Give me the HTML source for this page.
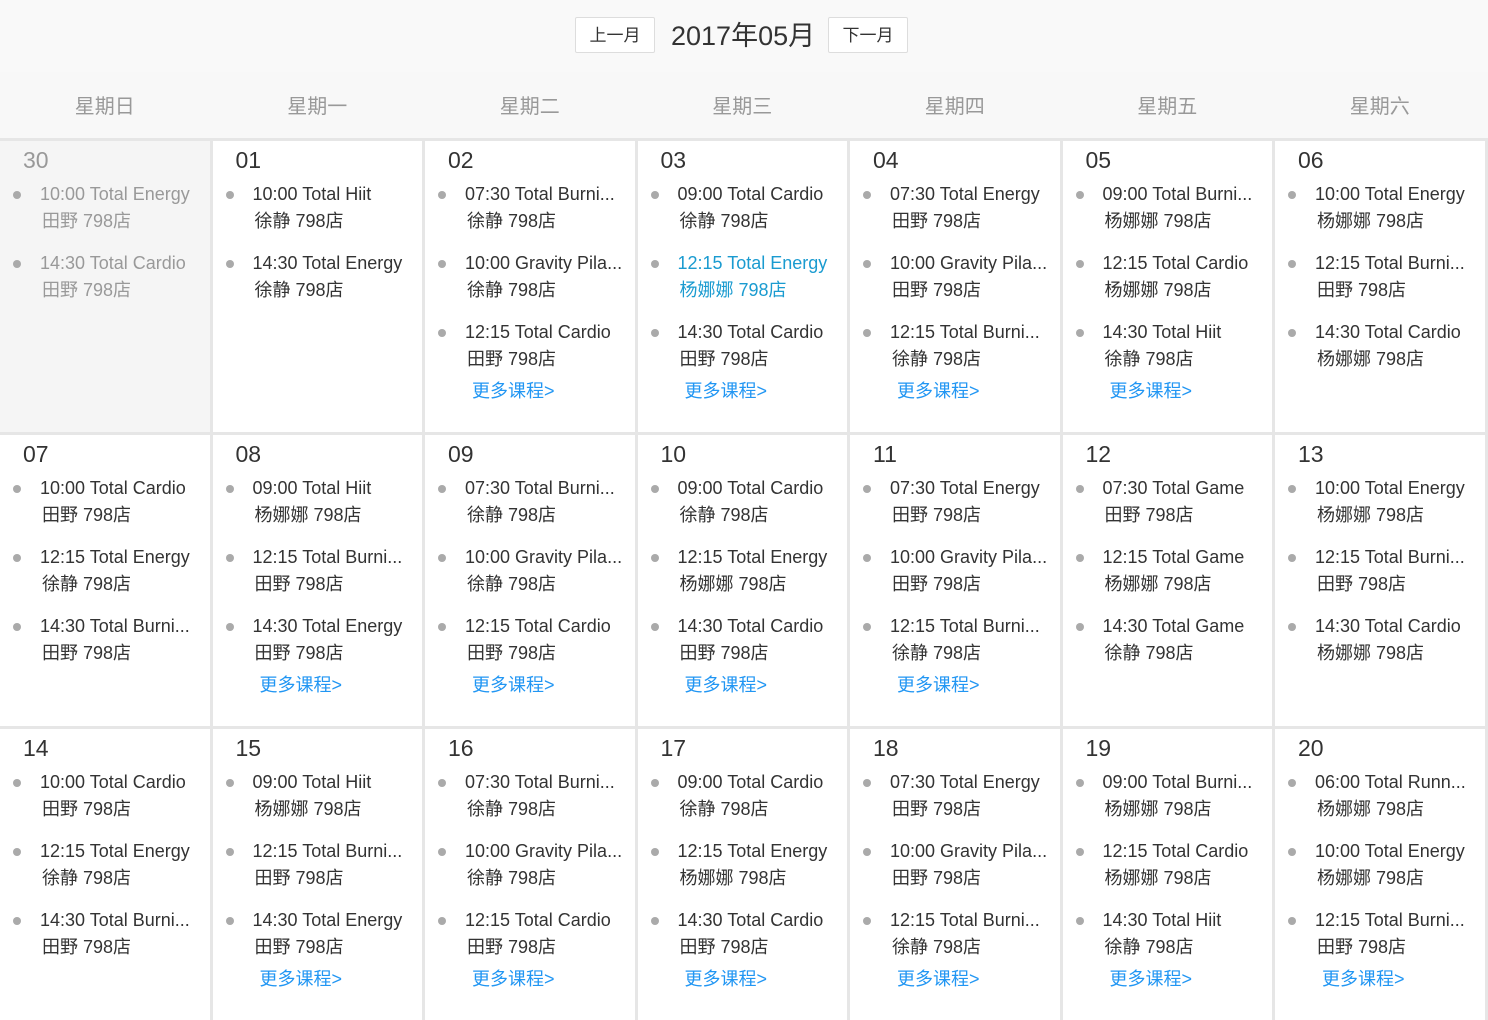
<!DOCTYPE html>
<html><head><meta charset="utf-8">
<style>
*{margin:0;padding:0;box-sizing:border-box}
body{width:1488px;height:1020px;overflow:hidden;background:#e6e6e6;font-family:"Liberation Sans","Noto Sans CJK SC",sans-serif;position:relative}
.top{position:absolute;left:0;top:0;width:1488px;height:72px;background:#f9f9f9}
.btn{position:absolute;top:17px;height:36px;width:80px;border:1px solid #ddd;border-radius:2px;background:#fff;font-size:17px;line-height:36px;text-align:center;color:#333}
.title{position:absolute;left:671px;top:16px;font-size:27px;line-height:40px;color:#333}
.wk{position:absolute;left:0;top:72px;width:1488px;height:66px;background:#f8f8f8}
.wk div{position:absolute;top:2px;width:209.5px;text-align:center;line-height:66px;font-size:20px;color:#999}
.c{position:absolute;width:209.5px;height:291px;background:#fff;color:#333}
.c.g{background:#f5f5f5;color:#999}
.d{position:absolute;left:23px;top:4px;font-size:23px;line-height:30px}
.e{position:absolute;left:0;width:209px;font-size:18px;line-height:27px;white-space:nowrap;margin-top:1px}
.e::before{content:"";position:absolute;left:13px;top:10px;width:8px;height:8px;border-radius:50%;background:#aaa}
.e span{display:block;padding-left:40px}
.e span+span{padding-left:42px}
.e.b{color:#1a9bd0}
.m{position:absolute;left:47px;top:237px;font-size:18px;line-height:27px;color:#2196f3}
</style></head><body>
<div class="top">
<div class="btn" style="left:575px">上一月</div>
<div class="title">2017年05月</div>
<div class="btn" style="left:828px">下一月</div>
</div>
<div class="wk">
<div style="left:0">星期日</div><div style="left:212.5px">星期一</div><div style="left:425px">星期二</div><div style="left:637.5px">星期三</div><div style="left:850px">星期四</div><div style="left:1062.5px">星期五</div><div style="left:1275px">星期六</div>
</div>

<!-- Row 1 -->
<div class="c g" style="left:0;top:141px"><div class="d">30</div>
<div class="e" style="top:38.5px"><span>10:00 Total Energy</span><span>田野 798店</span></div>
<div class="e" style="top:107.5px"><span>14:30 Total Cardio</span><span>田野 798店</span></div></div>
<div class="c" style="left:212.5px;top:141px"><div class="d">01</div>
<div class="e" style="top:38.5px"><span>10:00 Total Hiit</span><span>徐静 798店</span></div>
<div class="e" style="top:107.5px"><span>14:30 Total Energy</span><span>徐静 798店</span></div></div>
<div class="c" style="left:425px;top:141px"><div class="d">02</div>
<div class="e" style="top:38.5px"><span>07:30 Total Burni...</span><span>徐静 798店</span></div>
<div class="e" style="top:107.5px"><span>10:00 Gravity Pila...</span><span>徐静 798店</span></div>
<div class="e" style="top:176.5px"><span>12:15 Total Cardio</span><span>田野 798店</span></div><div class="m">更多课程&gt;</div></div>
<div class="c" style="left:637.5px;top:141px"><div class="d">03</div>
<div class="e" style="top:38.5px"><span>09:00 Total Cardio</span><span>徐静 798店</span></div>
<div class="e b" style="top:107.5px"><span>12:15 Total Energy</span><span>杨娜娜 798店</span></div>
<div class="e" style="top:176.5px"><span>14:30 Total Cardio</span><span>田野 798店</span></div><div class="m">更多课程&gt;</div></div>
<div class="c" style="left:850px;top:141px"><div class="d">04</div>
<div class="e" style="top:38.5px"><span>07:30 Total Energy</span><span>田野 798店</span></div>
<div class="e" style="top:107.5px"><span>10:00 Gravity Pila...</span><span>田野 798店</span></div>
<div class="e" style="top:176.5px"><span>12:15 Total Burni...</span><span>徐静 798店</span></div><div class="m">更多课程&gt;</div></div>
<div class="c" style="left:1062.5px;top:141px"><div class="d">05</div>
<div class="e" style="top:38.5px"><span>09:00 Total Burni...</span><span>杨娜娜 798店</span></div>
<div class="e" style="top:107.5px"><span>12:15 Total Cardio</span><span>杨娜娜 798店</span></div>
<div class="e" style="top:176.5px"><span>14:30 Total Hiit</span><span>徐静 798店</span></div><div class="m">更多课程&gt;</div></div>
<div class="c" style="left:1275px;top:141px"><div class="d">06</div>
<div class="e" style="top:38.5px"><span>10:00 Total Energy</span><span>杨娜娜 798店</span></div>
<div class="e" style="top:107.5px"><span>12:15 Total Burni...</span><span>田野 798店</span></div>
<div class="e" style="top:176.5px"><span>14:30 Total Cardio</span><span>杨娜娜 798店</span></div></div>

<!-- Row 2 -->
<div class="c" style="left:0;top:435px"><div class="d">07</div>
<div class="e" style="top:38.5px"><span>10:00 Total Cardio</span><span>田野 798店</span></div>
<div class="e" style="top:107.5px"><span>12:15 Total Energy</span><span>徐静 798店</span></div>
<div class="e" style="top:176.5px"><span>14:30 Total Burni...</span><span>田野 798店</span></div></div>
<div class="c" style="left:212.5px;top:435px"><div class="d">08</div>
<div class="e" style="top:38.5px"><span>09:00 Total Hiit</span><span>杨娜娜 798店</span></div>
<div class="e" style="top:107.5px"><span>12:15 Total Burni...</span><span>田野 798店</span></div>
<div class="e" style="top:176.5px"><span>14:30 Total Energy</span><span>田野 798店</span></div><div class="m">更多课程&gt;</div></div>
<div class="c" style="left:425px;top:435px"><div class="d">09</div>
<div class="e" style="top:38.5px"><span>07:30 Total Burni...</span><span>徐静 798店</span></div>
<div class="e" style="top:107.5px"><span>10:00 Gravity Pila...</span><span>徐静 798店</span></div>
<div class="e" style="top:176.5px"><span>12:15 Total Cardio</span><span>田野 798店</span></div><div class="m">更多课程&gt;</div></div>
<div class="c" style="left:637.5px;top:435px"><div class="d">10</div>
<div class="e" style="top:38.5px"><span>09:00 Total Cardio</span><span>徐静 798店</span></div>
<div class="e" style="top:107.5px"><span>12:15 Total Energy</span><span>杨娜娜 798店</span></div>
<div class="e" style="top:176.5px"><span>14:30 Total Cardio</span><span>田野 798店</span></div><div class="m">更多课程&gt;</div></div>
<div class="c" style="left:850px;top:435px"><div class="d">11</div>
<div class="e" style="top:38.5px"><span>07:30 Total Energy</span><span>田野 798店</span></div>
<div class="e" style="top:107.5px"><span>10:00 Gravity Pila...</span><span>田野 798店</span></div>
<div class="e" style="top:176.5px"><span>12:15 Total Burni...</span><span>徐静 798店</span></div><div class="m">更多课程&gt;</div></div>
<div class="c" style="left:1062.5px;top:435px"><div class="d">12</div>
<div class="e" style="top:38.5px"><span>07:30 Total Game</span><span>田野 798店</span></div>
<div class="e" style="top:107.5px"><span>12:15 Total Game</span><span>杨娜娜 798店</span></div>
<div class="e" style="top:176.5px"><span>14:30 Total Game</span><span>徐静 798店</span></div></div>
<div class="c" style="left:1275px;top:435px"><div class="d">13</div>
<div class="e" style="top:38.5px"><span>10:00 Total Energy</span><span>杨娜娜 798店</span></div>
<div class="e" style="top:107.5px"><span>12:15 Total Burni...</span><span>田野 798店</span></div>
<div class="e" style="top:176.5px"><span>14:30 Total Cardio</span><span>杨娜娜 798店</span></div></div>

<!-- Row 3 -->
<div class="c" style="left:0;top:729px"><div class="d">14</div>
<div class="e" style="top:38.5px"><span>10:00 Total Cardio</span><span>田野 798店</span></div>
<div class="e" style="top:107.5px"><span>12:15 Total Energy</span><span>徐静 798店</span></div>
<div class="e" style="top:176.5px"><span>14:30 Total Burni...</span><span>田野 798店</span></div></div>
<div class="c" style="left:212.5px;top:729px"><div class="d">15</div>
<div class="e" style="top:38.5px"><span>09:00 Total Hiit</span><span>杨娜娜 798店</span></div>
<div class="e" style="top:107.5px"><span>12:15 Total Burni...</span><span>田野 798店</span></div>
<div class="e" style="top:176.5px"><span>14:30 Total Energy</span><span>田野 798店</span></div><div class="m">更多课程&gt;</div></div>
<div class="c" style="left:425px;top:729px"><div class="d">16</div>
<div class="e" style="top:38.5px"><span>07:30 Total Burni...</span><span>徐静 798店</span></div>
<div class="e" style="top:107.5px"><span>10:00 Gravity Pila...</span><span>徐静 798店</span></div>
<div class="e" style="top:176.5px"><span>12:15 Total Cardio</span><span>田野 798店</span></div><div class="m">更多课程&gt;</div></div>
<div class="c" style="left:637.5px;top:729px"><div class="d">17</div>
<div class="e" style="top:38.5px"><span>09:00 Total Cardio</span><span>徐静 798店</span></div>
<div class="e" style="top:107.5px"><span>12:15 Total Energy</span><span>杨娜娜 798店</span></div>
<div class="e" style="top:176.5px"><span>14:30 Total Cardio</span><span>田野 798店</span></div><div class="m">更多课程&gt;</div></div>
<div class="c" style="left:850px;top:729px"><div class="d">18</div>
<div class="e" style="top:38.5px"><span>07:30 Total Energy</span><span>田野 798店</span></div>
<div class="e" style="top:107.5px"><span>10:00 Gravity Pila...</span><span>田野 798店</span></div>
<div class="e" style="top:176.5px"><span>12:15 Total Burni...</span><span>徐静 798店</span></div><div class="m">更多课程&gt;</div></div>
<div class="c" style="left:1062.5px;top:729px"><div class="d">19</div>
<div class="e" style="top:38.5px"><span>09:00 Total Burni...</span><span>杨娜娜 798店</span></div>
<div class="e" style="top:107.5px"><span>12:15 Total Cardio</span><span>杨娜娜 798店</span></div>
<div class="e" style="top:176.5px"><span>14:30 Total Hiit</span><span>徐静 798店</span></div><div class="m">更多课程&gt;</div></div>
<div class="c" style="left:1275px;top:729px"><div class="d">20</div>
<div class="e" style="top:38.5px"><span>06:00 Total Runn...</span><span>杨娜娜 798店</span></div>
<div class="e" style="top:107.5px"><span>10:00 Total Energy</span><span>杨娜娜 798店</span></div>
<div class="e" style="top:176.5px"><span>12:15 Total Burni...</span><span>田野 798店</span></div><div class="m">更多课程&gt;</div></div>
</body></html>
